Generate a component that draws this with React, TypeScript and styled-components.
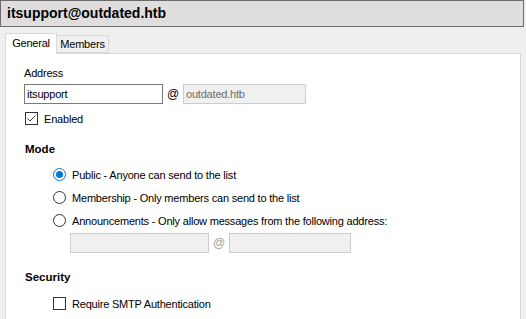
import styled, { createGlobalStyle } from "styled-components";

const GlobalStyle = createGlobalStyle`
  body {
    margin: 0;
    background: #f0eff0;
    font-family: "Liberation Sans", Arial, sans-serif;
    font-size: 11px;
    letter-spacing: -0.2px;
    color: #000;
  }
`;

const Window = styled.div`
  width: 526px;
  height: 319px;
  overflow: hidden;
  background: #f0eff0;
  display: flex;
  flex-direction: column;
`;

const Header = styled.div`
  box-sizing: border-box;
  width: 524px;
  height: 27px;
  border: 1px solid #6b6b6b;
  background: #dfdddd;
  padding-left: 6px;
  font-weight: bold;
  font-size: 14px;
  letter-spacing: 0;
  line-height: 25px;
`;

const TabStrip = styled.div`
  display: flex;
  align-items: flex-end;
  margin-top: 6px;
  padding-left: 5px;
  height: 20px;
  position: relative;
  z-index: 1;
`;

const Tab = styled.div<{ $active?: boolean }>`
  box-sizing: border-box;
  width: 52px;
  height: ${(p) => (p.$active ? "21px" : "18px")};
  margin-bottom: ${(p) => (p.$active ? "-1px" : "0")};
  background: ${(p) => (p.$active ? "#fff" : "#f0f0f0")};
  border: 1px solid #d9d9d9;
  border-bottom: ${(p) => (p.$active ? "none" : "1px solid #d9d9d9")};
  border-left: ${(p) => (p.$active ? "1px solid #d9d9d9" : "none")};
  display: flex;
  align-items: center;
  justify-content: center;
  padding-bottom: ${(p) => (p.$active ? "2px" : "0")};
`;

const Panel = styled.div`
  box-sizing: border-box;
  margin-left: 5px;
  width: 516px;
  flex: 1;
  background: #fff;
  border: 1px solid #d9d9d9;
  border-bottom: none;
  padding: 12px 0 0 18px;
  display: flex;
  flex-direction: column;
`;

const Label = styled.div`
  height: 15px;
  line-height: 15px;
`;

const Row = styled.div<{ $indent?: number; $top?: number }>`
  display: flex;
  align-items: center;
  margin-left: ${(p) => p.$indent ?? 0}px;
  margin-top: ${(p) => p.$top ?? 0}px;
`;

const TextBox = styled.div<{ $width: number; $disabled?: boolean }>`
  box-sizing: border-box;
  width: ${(p) => p.$width}px;
  height: 20px;
  border: 1px solid ${(p) => (p.$disabled ? "#cccccc" : "#7a7a7a")};
  background: ${(p) => (p.$disabled ? "#f0f0f0" : "#fff")};
  color: ${(p) => (p.$disabled ? "#6d6d6d" : "#000")};
  padding-left: 2px;
  line-height: 18px;
`;

const At = styled.span<{ $disabled?: boolean }>`
  width: 20px;
  text-align: center;
  font-size: 12px;
  color: ${(p) => (p.$disabled ? "#a0a0a0" : "#000")};
`;

const Heading = styled.div<{ $top: number }>`
  font-weight: bold;
  font-size: 11.5px;
  letter-spacing: 0;
  margin-left: 1px;
  margin-top: ${(p) => p.$top}px;
  line-height: 15px;
`;

const CheckBox = styled.span`
  box-sizing: border-box;
  width: 13px;
  height: 13px;
  border: 1px solid #333;
  background: #fff;
  margin-right: 6px;
  display: inline-flex;
  align-items: center;
  justify-content: center;
`;

const Radio = styled.span<{ $checked?: boolean }>`
  box-sizing: border-box;
  width: 13px;
  height: 13px;
  border-radius: 50%;
  border: 1px solid ${(p) => (p.$checked ? "#0078d7" : "#333")};
  background: #fff;
  margin-right: 6px;
  display: inline-flex;
  align-items: center;
  justify-content: center;
  &::after {
    content: "";
    display: ${(p) => (p.$checked ? "block" : "none")};
    width: 7px;
    height: 7px;
    border-radius: 50%;
    background: #0078d7;
  }
`;

const OptionRow = styled(Row)`
  height: 15px;
`;

function Check() {
  return (
    <svg width="11" height="11" viewBox="0 0 11 11">
      <path d="M1.5 5.5 L4 8 L9.5 2.5" fill="none" stroke="#444" strokeWidth="1" />
    </svg>
  );
}

export default function App() {
  return (
    <Window>
      <GlobalStyle />
      <Header>itsupport@outdated.htb</Header>
      <TabStrip>
        <Tab $active>General</Tab>
        <Tab>Members</Tab>
      </TabStrip>
      <Panel>
        <Label>Address</Label>
        <Row $top={3}>
          <TextBox $width={139}>itsupport</TextBox>
          <At>@</At>
          <TextBox $width={123} $disabled>outdated.htb</TextBox>
        </Row>
        <OptionRow $indent={1} $top={7}>
          <CheckBox>
            <Check />
          </CheckBox>
          Enabled
        </OptionRow>
        <Heading $top={16}>Mode</Heading>
        <OptionRow $indent={29} $top={10}>
          <Radio $checked />
          Public - Anyone can send to the list
        </OptionRow>
        <OptionRow $indent={29} $top={8}>
          <Radio />
          Membership - Only members can send to the list
        </OptionRow>
        <OptionRow $indent={29} $top={8}>
          <Radio />
          Announcements - Only allow messages from the following address:
        </OptionRow>
        <Row $indent={46} $top={5}>
          <TextBox $width={139} $disabled />
          <At $disabled>@</At>
          <TextBox $width={122} $disabled />
        </Row>
        <Heading $top={17}>Security</Heading>
        <OptionRow $indent={29} $top={11}>
          <CheckBox />
          Require SMTP Authentication
        </OptionRow>
      </Panel>
    </Window>
  );
}
